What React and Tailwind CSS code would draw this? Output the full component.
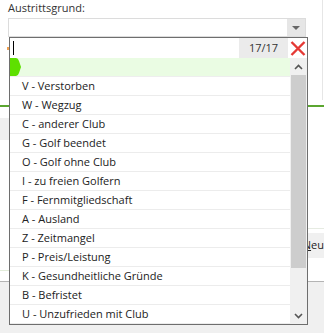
import React from "react";

const reasons = [
  "V - Verstorben",
  "W - Wegzug",
  "C - anderer Club",
  "G - Golf beendet",
  "O - Golf ohne Club",
  "I - zu freien Golfern",
  "F - Fernmitgliedschaft",
  "A - Ausland",
  "Z - Zeitmangel",
  "P - Preis/Leistung",
  "K - Gesundheitliche Gründe",
  "B - Befristet",
  "U - Unzufrieden mit Club",
];

const Chevron = ({ up }) => (
  <svg width="9" height="6" viewBox="0 0 9 6">
    <path
      d={up ? "M1 5 L4.5 1.5 L8 5" : "M1 1 L4.5 4.5 L8 1"}
      fill="none"
      stroke="#555"
      strokeWidth="1.6"
    />
  </svg>
);

const App = () => {
  return (
    <div
      className="relative flex min-h-[333px] flex-col bg-white text-[#222]"
      style={{ fontFamily: '"Open Sans", "Liberation Sans", sans-serif' }}
    >
      {/* page behind the dropdown */}
      <div className="h-[100px] w-[323px] border-r border-[#e6e6e6] pl-[8px]">
        <div className="text-[11px] leading-[16px] text-[#333]">Austrittsgrund:</div>
        <div className="mt-[2px] flex h-[19px] w-[298px] justify-end border border-[#dcdcdc]">
          <div className="flex w-[18px] items-center justify-center bg-[#e6e6e6]">
            <svg width="8" height="4" viewBox="0 0 8 4">
              <path d="M0 0 L8 0 L4 4 Z" fill="#666" />
            </svg>
          </div>
        </div>
        <div className="ml-[-1px] mt-[10px] h-[3px] w-[2px] bg-[#f0a050]"></div>
      </div>
      <div className="mt-[5px] h-[2px] bg-[#5ba630]"></div>
      <div className="flex h-[174px]">
        <div className="w-[300px]">
          <div className="mt-[11px] h-[22px] bg-[#f0f0f0]"></div>
          <div className="mt-[130px] h-px bg-[#e2ecd9]"></div>
        </div>
        <div className="flex-1">
          <div className="mt-[121px] h-px bg-[#e6ebe2]"></div>
          <div className="mt-[4px] flex h-[25px] items-center bg-[#f0f0f0] pl-[8px] text-[11px]">
            <span className="underline">N</span>eu
          </div>
        </div>
      </div>
      <div className="flex-1 border-t border-[#b4b4b4] bg-[#f0f0f0]"></div>

      {/* open dropdown */}
      <div className="absolute left-[9px] top-[37px] flex h-[288px] w-[299px] flex-col border border-[#6e6e6e] bg-white">
        <div className="flex h-[20px]">
          <div className="flex-1">
            <div className="ml-[3px] mt-[3px] h-[14px] w-px bg-black"></div>
          </div>
          <div className="flex w-[49px] items-center justify-center bg-[#ebebeb] text-[11px] text-[#333]">
            17/17
          </div>
          <div className="flex w-[19px] items-center justify-center">
            <svg width="16" height="15" viewBox="0 0 16 15">
              <path d="M1.5 1 L14.5 14 M14.5 1 L1.5 14" stroke="#e53935" strokeWidth="2.4" />
            </svg>
          </div>
        </div>
        <div className="flex flex-1">
          <div className="flex-1">
            <div className="h-[19px] border-b border-[#eeeeee] bg-[#eafce3]">
              <svg width="11" height="18" viewBox="0 0 11 18">
                <path d="M0 0 L6 0 Q8 0 9 3 L11 9 L9 15 Q8 18 6 18 L0 18 Z" fill="#5ee000" />
              </svg>
            </div>
            {reasons.map((r) => (
              <div
                key={r}
                className="h-[19px] border-b border-[#ececec] pl-[12px] text-[11px] leading-[18px]"
              >
                {r}
              </div>
            ))}
          </div>
          <div className="flex w-[17px] flex-col bg-[#f0f0f0]">
            <div className="flex h-[17px] items-center justify-center">
              <Chevron up />
            </div>
            <div className="mx-px h-[193px] bg-[#cdcdcd]"></div>
            <div className="flex-1"></div>
            <div className="flex h-[17px] items-center justify-center">
              <Chevron />
            </div>
          </div>
        </div>
      </div>
    </div>
  );
};

export default App;
